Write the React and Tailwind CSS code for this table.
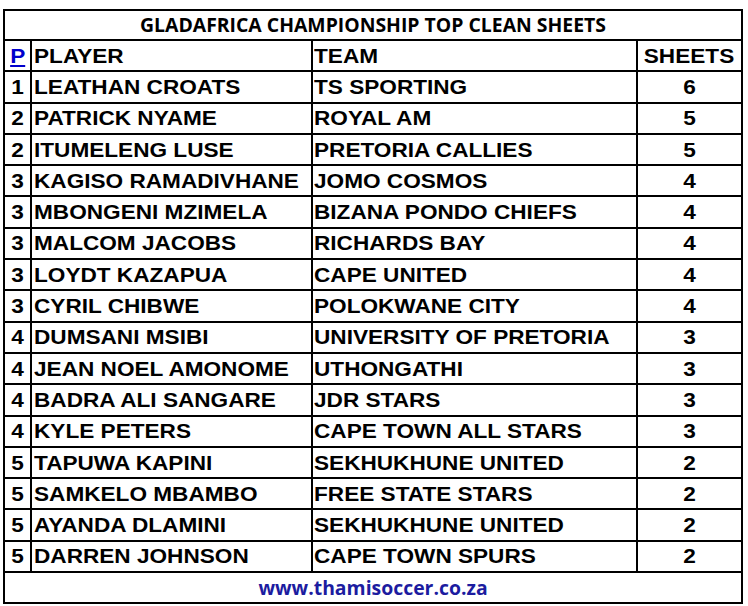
import React from 'react';

const rows = [
  ['1', 'LEATHAN CROATS', 'TS SPORTING', '6'],
  ['2', 'PATRICK NYAME', 'ROYAL AM', '5'],
  ['2', 'ITUMELENG LUSE', 'PRETORIA CALLIES', '5'],
  ['3', 'KAGISO RAMADIVHANE', 'JOMO COSMOS', '4'],
  ['3', 'MBONGENI MZIMELA', 'BIZANA PONDO CHIEFS', '4'],
  ['3', 'MALCOM JACOBS', 'RICHARDS BAY', '4'],
  ['3', 'LOYDT KAZAPUA', 'CAPE UNITED', '4'],
  ['3', 'CYRIL CHIBWE', 'POLOKWANE CITY', '4'],
  ['4', 'DUMSANI MSIBI', 'UNIVERSITY OF PRETORIA', '3'],
  ['4', 'JEAN NOEL AMONOME', 'UTHONGATHI', '3'],
  ['4', 'BADRA ALI SANGARE', 'JDR STARS', '3'],
  ['4', 'KYLE PETERS', 'CAPE TOWN ALL STARS', '3'],
  ['5', 'TAPUWA KAPINI', 'SEKHUKHUNE UNITED', '2'],
  ['5', 'SAMKELO MBAMBO', 'FREE STATE STARS', '2'],
  ['5', 'AYANDA DLAMINI', 'SEKHUKHUNE UNITED', '2'],
  ['5', 'DARREN JOHNSON', 'CAPE TOWN SPURS', '2'],
];

const cell = 'h-[31.3px] border-b-2 border-black flex items-center';
// the screenshot's text is stretched sideways a little
const wide = 'inline-block scale-x-[1.13]';

const App = () => {
  return (
    <div className="w-[748px] h-[606px] bg-white pt-[9px] pl-[3px]">
      <div className="w-[740px] border-2 border-black text-black font-['Liberation_Sans',Arial,sans-serif] font-bold">
        {/* Title */}
        <div className="h-[30px] border-b-2 border-black flex items-center justify-center font-['Open_Sans',sans-serif] font-bold text-[19.4px]">
          GLADAFRICA CHAMPIONSHIP TOP CLEAN SHEETS
        </div>

        {/* Table */}
        <div className="grid grid-cols-[27px_281px_325px_1fr] text-[20px] leading-none">
          <div className={`${cell} border-r-2 justify-center`}>
            <span className={`${wide} text-[#0000cc] underline underline-offset-2`}>P</span>
          </div>
          <div className={`${cell} border-r-2 pl-[2px]`}>
            <span className={`${wide} origin-left`}>PLAYER</span>
          </div>
          <div className={`${cell} border-r-2 pl-[1px]`}>
            <span className={`${wide} origin-left`}>TEAM</span>
          </div>
          <div className={`${cell} justify-center`}>
            <span className={wide}>SHEETS</span>
          </div>

          {rows.map((r, i) => (
            <React.Fragment key={i}>
              <div className={`${cell} border-r-2 justify-center`}>
                <span className={wide}>{r[0]}</span>
              </div>
              <div className={`${cell} border-r-2 pl-[2px] whitespace-nowrap`}>
                <span className={`${wide} origin-left`}>{r[1]}</span>
              </div>
              <div className={`${cell} border-r-2 pl-[1px] whitespace-nowrap`}>
                <span className={`${wide} origin-left`}>{r[2]}</span>
              </div>
              <div className={`${cell} justify-center`}>
                <span className={wide}>{r[3]}</span>
              </div>
            </React.Fragment>
          ))}
        </div>

        {/* Footer */}
        <div className="h-[29px] flex items-center justify-center font-['Open_Sans',sans-serif] font-bold text-[19.4px] text-[#1c1ca0]">
          www.thamisoccer.co.za
        </div>
      </div>
    </div>
  );
};

export default App;
